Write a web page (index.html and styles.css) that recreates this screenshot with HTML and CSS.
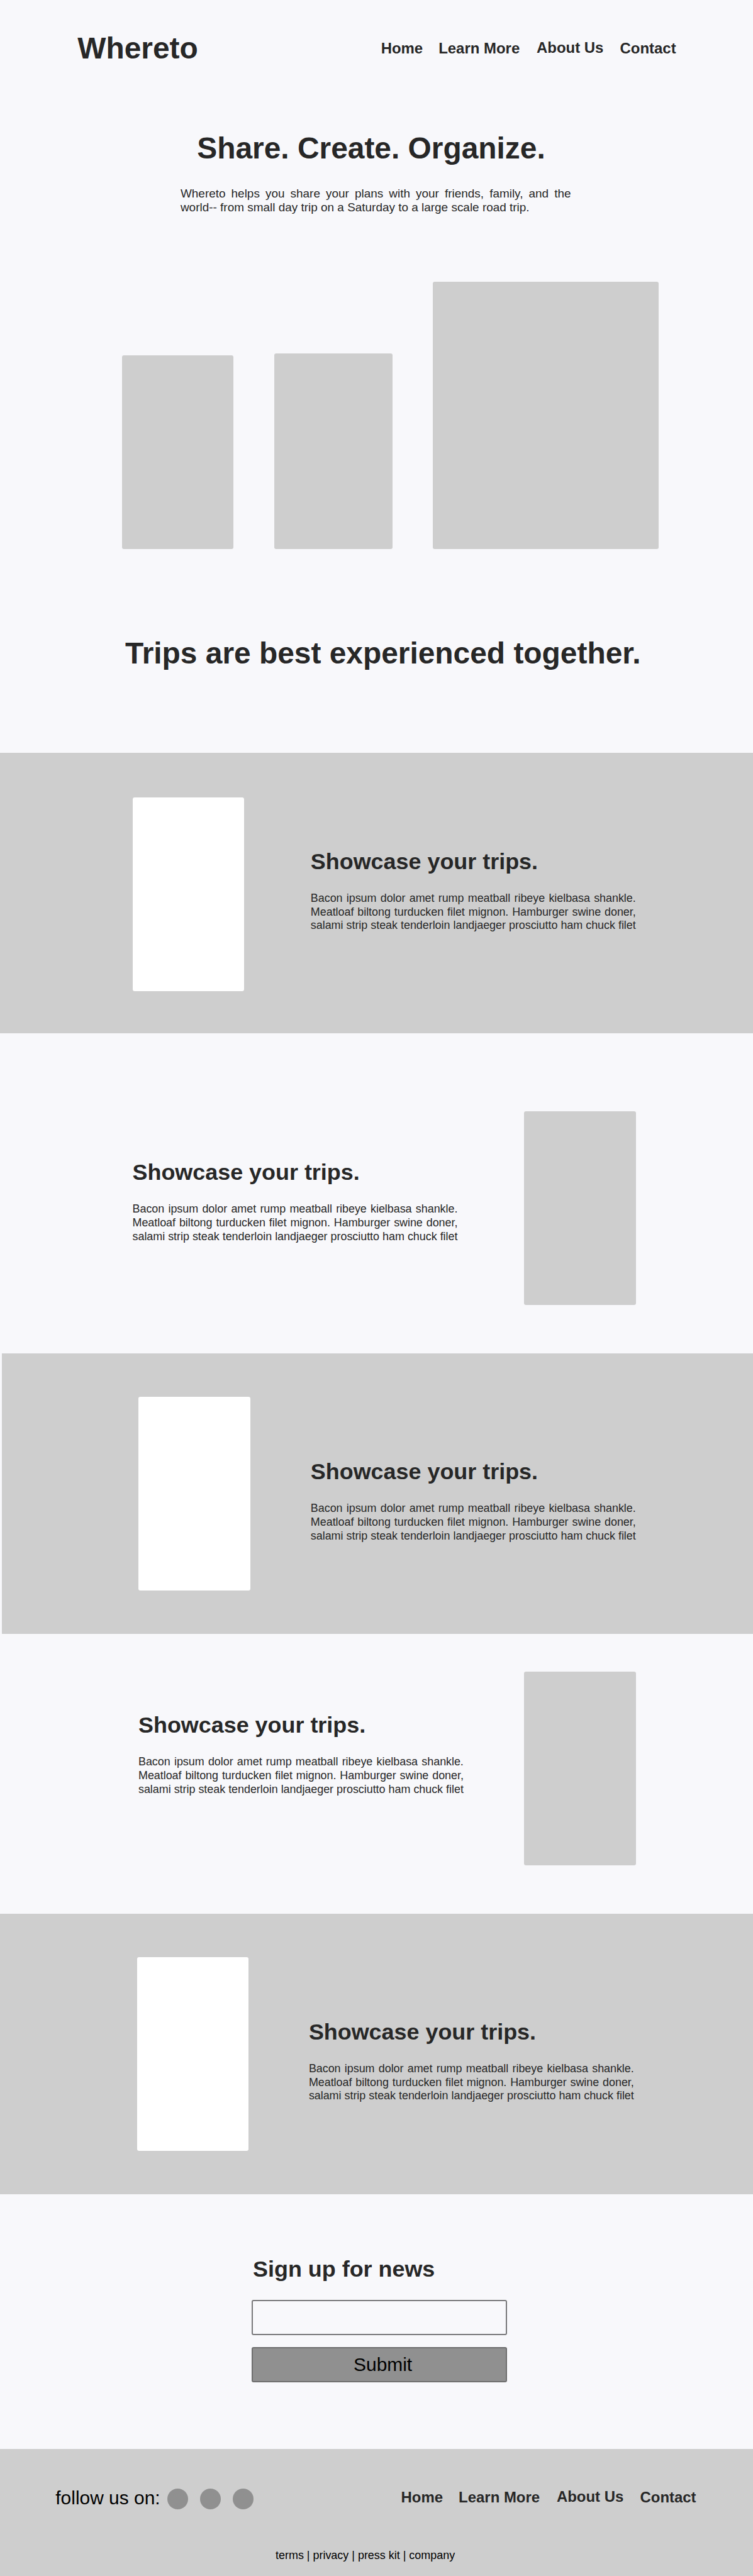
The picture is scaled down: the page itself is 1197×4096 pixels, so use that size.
FILE: index.html
```html
<!DOCTYPE html>
<html lang="en">
<head>
<meta charset="utf-8">
<title>Whereto</title>
<link rel="stylesheet" href="styles.css">
</head>
<body>
<header class="header">
  <div class="logo">Whereto</div>
  <nav class="nav">
    <a class="nav-home">Home</a>
    <a class="nav-learn">Learn More</a>
    <a class="nav-about">About Us</a>
    <a class="nav-contact">Contact</a>
  </nav>
</header>
<main>
  <section class="hero">
    <h1 class="title">Share. Create. Organize.</h1>
    <p class="intro"><span class="line">Whereto helps you share your plans with your friends, family, and the</span> <span class="line line-end">world-- from small day trip on a Saturday to a large scale road trip.</span></p>
  </section>
  <section class="gallery">
    <div class="shot shot-small"></div>
    <div class="shot shot-medium"></div>
    <div class="shot shot-large"></div>
  </section>
  <section class="tagline">
    <h2 class="title">Trips are best experienced together.</h2>
  </section>
  <section class="feature feature-1">
    <div class="picture"></div>
    <div class="copy">
      <h3 class="heading">Showcase your trips.</h3>
      <p class="text"><span class="line">Bacon ipsum dolor amet rump meatball ribeye kielbasa shankle.</span> <span class="line">Meatloaf biltong turducken filet mignon. Hamburger swine doner,</span> <span class="line">salami strip steak tenderloin landjaeger prosciutto ham chuck filet</span></p>
    </div>
  </section>
  <section class="feature feature-2">
    <div class="copy">
      <h3 class="heading">Showcase your trips.</h3>
      <p class="text"><span class="line">Bacon ipsum dolor amet rump meatball ribeye kielbasa shankle.</span> <span class="line">Meatloaf biltong turducken filet mignon. Hamburger swine doner,</span> <span class="line">salami strip steak tenderloin landjaeger prosciutto ham chuck filet</span></p>
    </div>
    <div class="picture"></div>
  </section>
  <section class="feature feature-3">
    <div class="picture"></div>
    <div class="copy">
      <h3 class="heading">Showcase your trips.</h3>
      <p class="text"><span class="line">Bacon ipsum dolor amet rump meatball ribeye kielbasa shankle.</span> <span class="line">Meatloaf biltong turducken filet mignon. Hamburger swine doner,</span> <span class="line">salami strip steak tenderloin landjaeger prosciutto ham chuck filet</span></p>
    </div>
  </section>
  <section class="feature feature-4">
    <div class="copy">
      <h3 class="heading">Showcase your trips.</h3>
      <p class="text"><span class="line">Bacon ipsum dolor amet rump meatball ribeye kielbasa shankle.</span> <span class="line">Meatloaf biltong turducken filet mignon. Hamburger swine doner,</span> <span class="line">salami strip steak tenderloin landjaeger prosciutto ham chuck filet</span></p>
    </div>
    <div class="picture"></div>
  </section>
  <section class="feature feature-5">
    <div class="picture"></div>
    <div class="copy">
      <h3 class="heading">Showcase your trips.</h3>
      <p class="text"><span class="line">Bacon ipsum dolor amet rump meatball ribeye kielbasa shankle.</span> <span class="line">Meatloaf biltong turducken filet mignon. Hamburger swine doner,</span> <span class="line">salami strip steak tenderloin landjaeger prosciutto ham chuck filet</span></p>
    </div>
  </section>
  <form class="signup">
    <h3 class="heading">Sign up for news</h3>
    <input class="field" type="text">
    <button class="submit" type="button">Submit</button>
  </form>
</main>
<footer class="footer">
  <div class="footer-row">
    <div class="follow">follow us on:</div>
    <div class="dots"><span class="dot"></span><span class="dot"></span><span class="dot"></span></div>
    <nav class="nav">
      <a class="nav-home">Home</a>
      <a class="nav-learn">Learn More</a>
      <a class="nav-about">About Us</a>
      <a class="nav-contact">Contact</a>
    </nav>
  </div>
  <div class="legal">terms | privacy | press kit | company</div>
</footer>
</body>
</html>
```
FILE: styles.css
```css
* { box-sizing: border-box; margin: 0; padding: 0; }

html { font-size: 9.9775px; background: #f8f8fb; }

body {
  font-family: "Liberation Sans", Arial, sans-serif;
  color: #272727;
  overflow-x: hidden;
}

.header { display: flex; height: 14rem; padding: 5.04rem 0 0 12.35rem; }
.logo { width: 48.35rem; font-size: 4.8rem; line-height: 5.4rem; font-weight: bold; }

.nav { display: flex; align-items: flex-start; font-size: 2.4rem; line-height: 2.8rem; font-weight: bold; white-space: nowrap; }
.header .nav { margin-top: 1.23rem; }
.nav-learn { margin-left: 2.51rem; }
.nav-about { margin: -.1rem 0 0 2.69rem; }
.nav-contact { margin-left: 2.62rem; }

.title { font-size: 4.8rem; line-height: 5.4rem; white-space: nowrap; }

.hero { height: 30.9rem; padding: 6.91rem 0 0 28.76rem; }
.hero .title { margin-left: 2.64rem; }
.intro { width: 62.2rem; margin-top: 3.44rem; font-size: 1.9rem; line-height: 2.18rem; }

.line { display: block; white-space: nowrap; text-align-last: justify; }
.line-end { text-align-last: left; }

.gallery { display: flex; align-items: flex-end; height: 42.6rem; padding-left: 19.4rem; }
.shot { background: #cecece; border-radius: 3px; }
.shot-small { width: 17.8rem; height: 30.9rem; }
.shot-medium { width: 18.8rem; height: 31.2rem; margin-left: 6.5rem; }
.shot-large { width: 35.9rem; height: 42.6rem; margin-left: 6.5rem; }

.tagline { height: 32.5rem; padding: 13.94rem 0 0 19.95rem; }

.feature { display: flex; align-items: flex-start; height: 44.7rem; }
.picture { width: 17.8rem; height: 30.9rem; border-radius: 3px; background: #cecece; }
.copy { width: 51.8rem; }
.heading { font-size: 3.6rem; line-height: 4rem; white-space: nowrap; }
.text { margin-top: 2.82rem; font-size: 1.8rem; line-height: 2.18rem; letter-spacing: -.004rem; }

.feature-1, .feature-3, .feature-5 { background: #cecece; }
.feature-1 .picture, .feature-3 .picture, .feature-5 .picture { background: #fff; }

.feature-1 { padding-left: 21.1rem; }
.feature-1 .picture { margin-top: 7.1rem; }
.feature-1 .copy { margin: 15.3rem 0 0 10.6rem; }

.feature-2 { height: 51rem; padding-left: 21.1rem; }
.feature-2 .picture { margin: 12.4rem 0 0 10.6rem; }
.feature-2 .copy { margin-top: 20.12rem; }

.feature-3 { margin-left: .3rem; padding-left: 20.8rem; }
.feature-3 .picture { margin: 6.9rem 0 0 1rem; }
.feature-3 .copy { margin: 16.85rem 0 0 9.6rem; }

.feature-4 { height: 44.6rem; padding-left: 22.05rem; }
.feature-4 .picture { margin: 6rem 0 0 9.65rem; }
.feature-4 .copy { margin-top: 12.52rem; }

.feature-5 { padding-left: 21.8rem; }
.feature-5 .picture { margin-top: 6.9rem; }
.feature-5 .copy { margin: 16.82rem 0 0 9.6rem; }

.signup { display: flex; flex-direction: column; width: 80.8rem; height: 40.6rem; padding: 9.92rem 0 0 40.1rem; }
.signup .heading { padding-left: .2rem; }
.field, .submit { width: 40.7rem; height: 5.6rem; border: 2px solid #78787a; border-radius: 3px; }
.field { margin-top: 2.88rem; background: transparent; }
.submit { margin-top: 2rem; padding-left: 1.1rem; border-color: #6e6e6e; background: #909090; color: #000; font-family: inherit; font-size: 3rem; line-height: 3.4rem; }

.footer { height: 20.3rem; padding-top: 6.3rem; background: #cecece; }
.footer-row { display: flex; height: 10rem; padding-left: 8.85rem; }
.follow { width: 17.85rem; font-size: 3rem; line-height: 3.4rem; margin-top: -.17rem; color: #000; white-space: nowrap; }
.dots { display: flex; gap: 1.9rem; width: 37.2rem; }
.dot { width: 3.3rem; height: 3.3rem; border-radius: 50%; background: #909090; }
.legal { padding-left: 43.9rem; margin-top: -.42rem; font-size: 1.8rem; line-height: 2.2rem; color: #000; }
```
